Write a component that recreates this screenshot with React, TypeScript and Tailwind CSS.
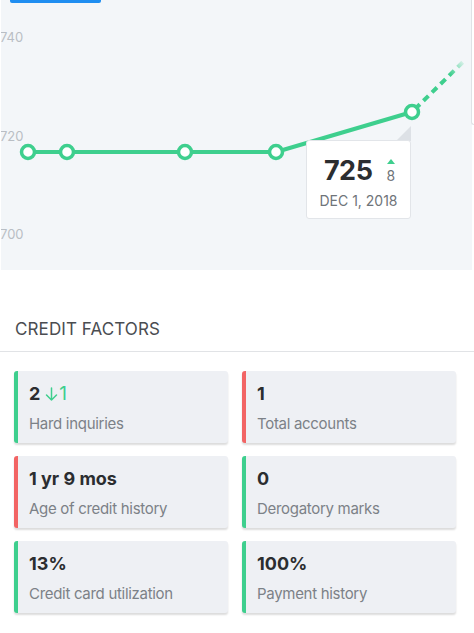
import React from 'react'

const GREEN = '#3ecf8e'

type Factor = {
  value: string
  delta?: string
  label: string
  good: boolean
}

const factors: Factor[] = [
  { value: '2', delta: '1', label: 'Hard inquiries', good: true },
  { value: '1', label: 'Total accounts', good: false },
  { value: '1 yr 9 mos', label: 'Age of credit history', good: false },
  { value: '0', label: 'Derogatory marks', good: true },
  { value: '13%', label: 'Credit card utilization', good: true },
  { value: '100%', label: 'Payment history', good: true },
]

const points: [number, number][] = [
  [27, 152],
  [66, 152],
  [184, 152],
  [275, 152],
  [411, 112],
]

function ScoreChart() {
  const d = points.map(([x, y], i) => `${i === 0 ? 'M' : 'L'}${x} ${y}`).join(' ')
  return (
    <svg width="471" height="270" className="block">
      <defs>
        <linearGradient id="fade" x1="411" y1="112" x2="462" y2="62" gradientUnits="userSpaceOnUse">
          <stop offset="0" stopColor={GREEN} stopOpacity="1" />
          <stop offset="0.75" stopColor={GREEN} stopOpacity="1" />
          <stop offset="1" stopColor={GREEN} stopOpacity="0.15" />
        </linearGradient>
      </defs>
      <g fill="#b9bec4" fontSize="13" fontFamily="Inter, 'Noto Sans', sans-serif">
        <text x="-1" y="42">740</text>
        <text x="-1" y="141">720</text>
        <text x="-1" y="239">700</text>
      </g>
      <path d={d} fill="none" stroke={GREEN} strokeWidth="4" strokeLinejoin="round" />
      <path
        d="M411 112 L462 62"
        fill="none"
        stroke="url(#fade)"
        strokeWidth="4"
        strokeDasharray="7 5"
        strokeDashoffset="-4"
      />
      {points.map(([x, y]) => (
        <circle key={x} cx={x} cy={y} r="6.5" fill="#ffffff" stroke={GREEN} strokeWidth="3.5" />
      ))}
      <path d="M395 141 L410 126 L410 141 Z" fill="#dde1e6" />
    </svg>
  )
}

function FactorCard({ factor }: { factor: Factor }) {
  return (
    <div
      className={`h-[72px] rounded-[3px] border-l-4 bg-[#eef0f4] pl-[11px] shadow-[0_2px_2px_rgba(0,0,0,0.14)] ${
        factor.good ? 'border-[#3ecf8e]' : 'border-[#f26464]'
      }`}
    >
      <div className="flex items-center gap-[5px] pt-[10px] text-[18px] leading-[26px] text-[#2b2d30]">
        <span className="font-bold">{factor.value}</span>
        {factor.delta && (
          <span className="flex items-center text-[19px] text-[#3ecf8e]">
            <svg width="13" height="16" viewBox="0 0 13 16" fill="none" stroke={GREEN} strokeWidth="1.5" strokeLinecap="round" strokeLinejoin="round">
              <path d="M6.5 2 V14 M1.5 9 L6.5 14 L11.5 9" />
            </svg>
            <span className="ml-[1px]">{factor.delta}</span>
          </span>
        )}
      </div>
      <div className="mt-[7px] text-[15px] leading-[20px] tracking-[-0.3px] text-[#7c8187]">{factor.label}</div>
    </div>
  )
}

export default function App() {
  return (
    <div
      className="relative h-[633px] w-[474px] overflow-hidden bg-white"
      style={{ fontFamily: "Inter, 'Noto Sans', sans-serif" }}
    >
      {/* Chart */}
      <div className="relative ml-[1px] h-[270px] w-[471px] bg-[#f3f6f9]">
        <div className="absolute left-[9px] top-0 h-[3px] w-[91px] rounded-b-[2px] bg-[#1f8ef1]" />
        <ScoreChart />
        <div className="absolute left-[305px] top-[140px] flex h-[79px] w-[105px] flex-col items-center rounded-[3px] border border-[#e2e5e9] bg-white">
          <div className="mt-[14px] flex items-start gap-[14px] pl-[2px]">
            <span className="text-[27px] font-bold leading-[32px] tracking-[-0.5px] text-[#2b2d30]">725</span>
            <span className="flex flex-col items-center pt-[4px]">
              <svg width="8" height="5" viewBox="0 0 8 5">
                <path d="M0 5 L4 0 L8 5 Z" fill={GREEN} />
              </svg>
              <span className="mt-[3px] text-[14px] leading-[18px] text-[#6f7479]">8</span>
            </span>
          </div>
          <div className="mt-[5px] text-[14px] leading-[18px] text-[#6f7479]">DEC 1, 2018</div>
        </div>
      </div>
      <div className="absolute right-0 top-0 h-[125px] w-[3px] rounded-bl-[4px] border-b border-l border-[#dfe2e6] bg-white" />

      {/* Credit factors */}
      <div className="mt-[45px] border-b border-[#e1e3e6] px-[15px] pb-[7px]">
        <h2 className="text-[17px] leading-[29px] tracking-[0.1px] text-[#4a4d51]">CREDIT FACTORS</h2>
      </div>
      <div className="grid grid-cols-2 gap-x-[14px] gap-y-[13px] px-[14px] pt-[19px] pr-[18px]">
        {factors.map((f) => (
          <FactorCard key={f.label} factor={f} />
        ))}
      </div>
    </div>
  )
}
